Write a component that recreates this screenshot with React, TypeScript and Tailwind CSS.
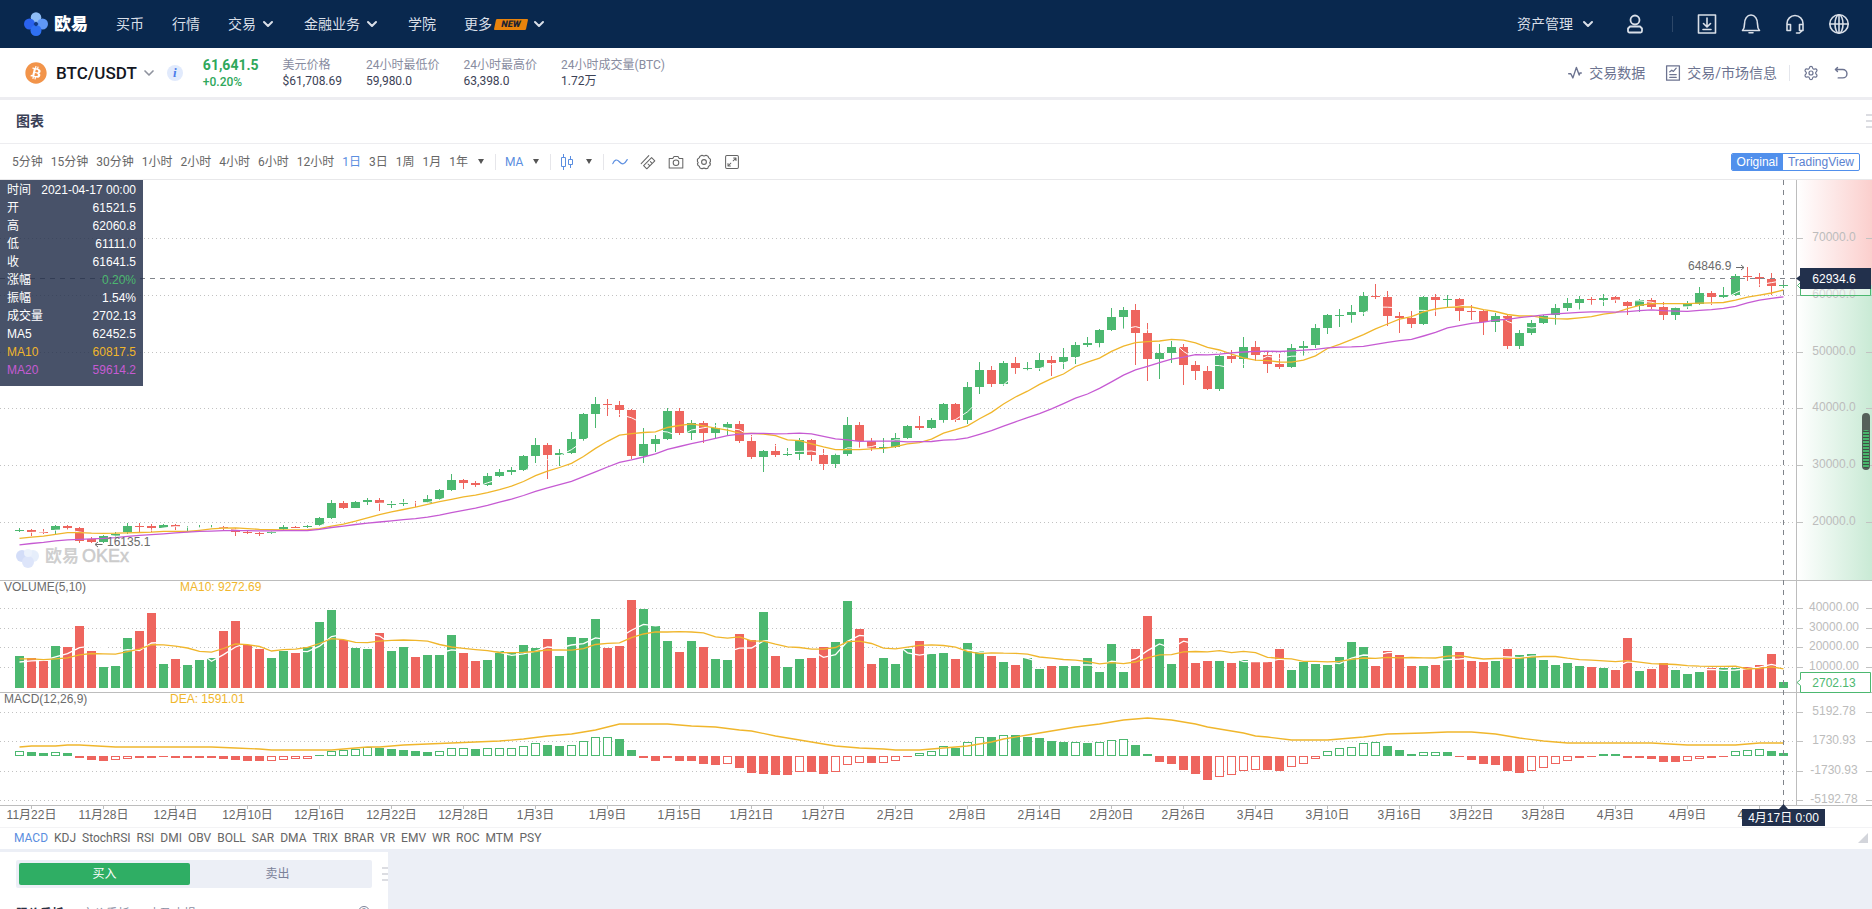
import type { ReactNode } from "react";
import { FaBitcoin } from "react-icons/fa";
import { ChevronDown, Settings } from "lucide-react";

const GREEN = "#4cb870";
const RED = "#ee655e";
const GOLD = "#f0b62c";
const PURPLE = "#c65bd3";
const WHITE = "#ffffff";

const STEP = 12;
const FIRST_X = 15;
const AXIS_X = 1796;
const VOLUME_BASE = 508;
const MACD_ZERO = 576;

// One entry per day: colour, then high / body top / body bottom / low in chart units.
const CANDLES = `
g348,350,351,352 r349,350,352,356 r349,352,353,354 g345,346,350,354 r345,346,348,350 r347,348,361,363
r357,359,362,363 g355,356,362,363 g352,354,356,357 g343,346,352,354 r343,346,347,352 r344,346,348,352
g344,345,348,348 r344,345,347,350 g346,349,349,351 g345,349,349,348 g345,348,348,348 r346,347,348,350
r348,349,352,356 r351,352,353,354 r352,353,354,356 g351,352,353,354 g345,347,349,350 r346,347,348,348
g345,346,347,348 g337,338,345,346 g320,323,338,339 r321,323,328,329 g321,322,328,328 g318,320,322,325
r318,320,323,331 g321,324,325,328 g319,323,324,326 r321,324,324,327 g315,319,323,323 g309,310,319,320
g294,300,310,311 r299,300,303,309 r301,303,305,307 g293,296,305,306 g289,292,296,297 g287,290,292,295
g275,276,290,291 g258,265,276,283 r263,265,275,299 g269,273,275,286 g252,259,273,274 g233,234,259,261
g217,224,234,248 r219,224,225,236 r221,225,230,237 r229,230,276,279 g248,264,276,283 g255,259,264,272
g228,231,259,260 r228,231,253,255 g240,243,253,260 r241,243,253,263 g243,248,253,258 g242,244,248,255
r241,244,261,263 r255,261,277,279 g270,271,277,292 r264,271,275,277 g268,274,275,276 g258,260,274,280
r259,260,275,281 r269,275,284,290 g273,275,284,288 g237,245,274,276 r242,245,261,268 r258,261,268,271
g258,267,268,273 g253,258,267,268 g245,246,258,259 r236,246,248,250 g238,240,248,249 g223,224,240,243
r223,224,240,242 g202,207,240,244 g182,190,207,214 r186,190,204,207 g181,183,204,206 r177,183,188,194
g182,188,189,191 g173,180,188,191 r176,180,183,196 g168,177,182,189 g162,165,177,184 g157,163,165,167
g149,150,163,168 g128,137,150,151 g127,130,137,149 r124,130,153,185 r143,153,179,201 g164,173,179,199
g161,167,173,183 r164,167,185,205 r181,185,191,200 r186,191,209,210 g175,176,209,211 r170,176,179,183
g157,167,179,188 r161,167,175,181 r171,175,184,193 r174,184,187,189 g164,168,187,188 g161,166,168,176
g144,148,165,168 g134,135,148,154 g129,135,136,147 g125,132,135,143 g112,116,132,136 r104,116,117,119
r111,117,136,146 r132,136,138,153 r131,138,144,148 g116,117,144,145 r114,117,120,136 g115,119,120,127
r118,119,131,141 r125,131,132,140 r130,131,142,155 g133,136,142,152 r134,136,166,169 g150,153,166,169
g140,143,153,155 g135,136,143,144 g124,128,135,145 g118,123,128,131 g116,119,123,130 r117,119,120,125
g114,118,120,126 r116,117,120,123 r121,122,126,135 g119,120,126,132 r118,120,127,129 r122,127,135,140
g127,128,135,140 g121,124,127,129 g107,113,124,125 r111,113,117,125 g107,115,117,118 g94,96,115,116
r87,96,97,101 r93,97,99,107 r93,99,106,115 g101,105,106,108`
  .trim()
  .split(/\s+/)
  .map((s) => {
    const [high, top, bottom, low] = s.slice(1).split(",").map(Number);
    return { up: s[0] === "g", high, top, bottom, low };
  });

const VOLUMES = [
  32, 30, 27, 42, 41, 62, 37, 21, 22, 50, 57, 75, 24, 29, 23, 28, 30, 57, 67, 43, 39, 30, 37, 35, 41, 66, 78, 48, 40, 39,
  55, 37, 41, 31, 33, 33, 53, 35, 27, 28, 37, 36, 43, 40, 49, 32, 51, 50, 69, 40, 42, 88, 79, 62, 47, 36, 47, 41, 29, 28,
  54, 48, 76, 32, 21, 29, 30, 41, 46, 87, 59, 24, 30, 24, 39, 47, 34, 35, 29, 45, 37, 32, 26, 23, 30, 19, 22, 22, 22, 30,
  16, 44, 16, 39, 72, 49, 24, 50, 25, 27, 27, 25, 28, 26, 26, 39, 18, 26, 24, 23, 31, 46, 41, 22, 37, 33, 22, 22, 23, 42,
  36, 27, 26, 27, 39, 33, 34, 28, 23, 25, 22, 21, 20, 18, 50, 17, 19, 25, 18, 14, 16, 20, 20, 20, 21, 23, 34, 6,
];

// Histogram values; "h" marks a hollow bar.
const MACD = `
5h 4 3 4h 3 -2 -4 -5 -4h -3h -2 -2 -1 -2 -2 -2 -2 -3 -4 -5 -5 -5h -4h -3h -3h 1 5h 6h 7h 9h 8 7 6 5 4 5h 8h 8h 7 8h
8h 8h 10h 13h 11 10 11h 15h 19h 19h 17 6 -2 -5 -2 -5 -5 -8 -9 -8h -12 -17 -18 -19 -19 -16h -16 -18 -16h -9h -7h -7
-7h -5h -1 3h 5h 10h 8 14h 19h 19 21h 21 19 18 15 14 14h 13 14h 16h 17h 11 2 -6 -8 -14 -18 -24 -21h -19h -15h -14h
-14 -15 -11h -8h -3h 5h 8h 9h 13h 14h 10 6 2 4h 4h 4 -1 -4 -8 -9 -15 -17 -15h -12h -8h -5h -2 -1 2 2 -2 -2 -3 -6 -6
-5h -3h -2 -1 5h 6h 7h 5 3`
  .trim()
  .split(/\s+/)
  .map((s) => ({ value: parseInt(s, 10), hollow: s.endsWith("h") }));

// [day index, y]
const DEA: [number, number][] = [
  [0, 567], [1, 566], [3, 566], [4, 565], [5, 565], [8, 567], [16, 567], [18, 568], [20, 569], [21, 570], [26, 570],
  [27, 569], [29, 567], [30, 567], [32, 565], [34, 564], [36, 563], [38, 562], [40, 561], [42, 559], [44, 556],
  [46, 554], [47, 552], [48, 550], [49, 547], [50, 544], [54, 544], [56, 546], [58, 547], [60, 550], [61, 551],
  [63, 556], [65, 560], [67, 564], [68, 566], [70, 568], [72, 569], [73, 570], [75, 570], [77, 568], [79, 566],
  [81, 562], [82, 559], [84, 555], [86, 551], [88, 547], [90, 544], [92, 540], [94, 538], [96, 540], [98, 544],
  [99, 547], [102, 553], [103, 556], [104, 557], [106, 560], [107, 560], [109, 560], [112, 557], [114, 554],
  [117, 553], [119, 552], [121, 552], [123, 554], [125, 558], [127, 561], [129, 563], [136, 563], [139, 565],
  [143, 565], [145, 563], [147, 563],
];

// Closes and volumes from before the visible range, so the averages start on day one.
const EARLIER_CLOSES = [379, 377, 376, 368, 368, 372, 368, 369, 369, 367, 364, 363, 365, 365, 361, 356, 355, 355, 350];
const EARLIER_VOLUMES = [30, 36, 33, 31, 32, 24, 25, 24, 25];

const DATES = [
  "11月22日", "11月28日", "12月4日", "12月10日", "12月16日", "12月22日", "12月28日", "1月3日", "1月9日", "1月15日",
  "1月21日", "1月27日", "2月2日", "2月8日", "2月14日", "2月20日", "2月26日", "3月4日", "3月10日", "3月16日",
  "3月22日", "3月28日", "4月3日", "4月9日", "4月15日",
];

const SCALE: [number, string][] = [
  [58, "70000.0"], [115, "60000.0"], [172, "50000.0"], [228, "40000.0"], [285, "30000.0"], [342, "20000.0"],
  [428, "40000.00"], [448, "30000.00"], [467, "20000.00"], [487, "10000.00"],
  [532, "5192.78"], [561, "1730.93"], [591, "-1730.93"], [620, "-5192.78"],
];

const centerX = (i: number) => FIRST_X + 4.5 + STEP * i;

function average(earlier: number[], values: number[], size: number) {
  const all = [...earlier, ...values];
  return values.map((_, i) => {
    const end = earlier.length + i + 1;
    const part = all.slice(Math.max(0, end - size), end);
    return part.reduce((a, b) => a + b, 0) / part.length;
  });
}

const toPoints = (ys: number[]) => ys.map((y, i) => `${centerX(i)},${y.toFixed(1)}`).join(" ");

function Line({ points, color, width = 1.3 }: { points: string; color: string; width?: number }) {
  return <polyline points={points} fill="none" stroke={color} strokeWidth={width} />;
}

function Chart() {
  const closes = CANDLES.map((c) => (c.up ? c.top : c.bottom));
  const volumeLine = (size: number) =>
    toPoints(average(EARLIER_VOLUMES, VOLUMES, size).map((v) => VOLUME_BASE - v));

  return (
    <svg
      viewBox="0 0 1872 647"
      className="block w-full font-['Liberation_Sans','Noto_Sans_CJK_SC',sans-serif] text-[12px]"
      role="img"
      aria-label="BTC/USDT K线图"
    >
      <defs>
        <linearGradient id="sell">
          <stop offset="0" stopColor="#fff" />
          <stop offset="1" stopColor="#fbcfcd" />
        </linearGradient>
        <linearGradient id="buy">
          <stop offset="0" stopColor="#fff" />
          <stop offset="1" stopColor="#c9ead5" />
        </linearGradient>
        <pattern id="stripes" width="8" height="3" patternUnits="userSpaceOnUse">
          <rect width="8" height="3" fill="#3f4f45" />
          <rect width="8" height="2" fill="#48b56c" />
        </pattern>
      </defs>

      {/* depth shading behind the price scale */}
      <rect x="1797" width="75" height="105" fill="url(#sell)" />
      <rect x="1797" y="105" width="75" height="295" fill="url(#buy)" />

      {/* watermark */}
      <g opacity="0.5">
        <circle cx="22" cy="376" r="6" fill="#a9bdf3" />
        <circle cx="33" cy="376" r="6" fill="#cfdff9" />
        <circle cx="28" cy="382" r="6" fill="#bdcdf6" />
        <circle cx="28" cy="373" r="4" fill="#dbe6fb" />
      </g>
      <text x="45" y="382" fontSize="17" fontWeight="700" fill="#cfcfcf">欧易</text>
      <text x="82" y="382" fontSize="18" fill="#cbcbcb" stroke="#cbcbcb" strokeWidth="0.5">OKEx</text>

      {SCALE.map(([y, label]) => (
        <g key={y}>
          <path d={`M0 ${y + 0.5}H${AXIS_X}`} stroke="#c2c2c2" strokeDasharray="1 3" />
          <path d={`M1797 ${y + 0.5}h6M1866 ${y + 0.5}h6`} stroke="#c2c2c2" />
          <text x="1834" y={y + 3} textAnchor="middle" fill="#bcbcbc">{label}</text>
        </g>
      ))}
      <path d="M0 400.5H1872M0 512.5H1872M0 625.5H1872M1796.5 0V625" stroke="#bdbdbd" fill="none" />

      {CANDLES.map((c, i) => {
        const x = FIRST_X + STEP * i;
        const color = c.up ? GREEN : RED;
        return (
          <g key={i} fill={color}>
            <rect x={x + 4} y={c.high} width="1" height={Math.max(1, c.low - c.high)} />
            <rect x={x} y={c.top} width="9" height={c.bottom - c.top} />
            <rect x={x} y={VOLUME_BASE - VOLUMES[i]} width="9" height={VOLUMES[i]} />
          </g>
        );
      })}

      {MACD.map(({ value, hollow }, i) => {
        const x = FIRST_X + STEP * i;
        const color = value > 0 ? GREEN : RED;
        const size = Math.abs(value);
        const y = value > 0 ? MACD_ZERO - size : MACD_ZERO;
        return hollow ? (
          <rect key={i} x={x + 0.5} y={y + 0.5} width="8" height={size - 1} fill="#fff" stroke={color} />
        ) : (
          <rect key={i} x={x} y={y} width="9" height={size} fill={color} />
        );
      })}

      <Line points={toPoints(average(EARLIER_CLOSES, closes, 5))} color={WHITE} width={1} />
      <Line points={toPoints(average(EARLIER_CLOSES, closes, 10))} color={GOLD} />
      <Line points={toPoints(average(EARLIER_CLOSES, closes, 20))} color={PURPLE} />
      <Line points={volumeLine(5)} color={WHITE} />
      <Line points={volumeLine(10)} color={GOLD} />
      <Line points={DEA.map(([i, y]) => `${centerX(i)},${y}`).join(" ")} color={GOLD} />

      <g fill="#6b6b6b">
        <text x="107" y="366">16135.1</text>
        <text x="1688" y="90">64846.9</text>
        <text x="4" y="411">VOLUME(5,10)</text>
        <text x="4" y="523">MACD(12,26,9)</text>
      </g>
      <path d="M95.5 364.5h7M98 362l-3 2.500l3 2.500M1736 87.500h8M1741 85l3 2.500l-3 2.500" fill="none" stroke="#6b6b6b" />
      <text x="180" y="411" fill={GOLD}>MA10: 9272.69</text>
      <text x="170" y="523" fill={GOLD}>DEA: 1591.01</text>

      {DATES.map((date, n) => {
        const x = centerX(1 + n * 6);
        return (
          <g key={date}>
            <path d={`M${x} 625v4`} stroke="#bdbdbd" />
            <text x={x} y="639" textAnchor="middle" fill="#666">{date}</text>
          </g>
        );
      })}

      {/* crosshair */}
      <path d={`M0 98.500H${AXIS_X}M1783.500 0V625`} stroke="#80848b" strokeDasharray="5 5" fill="none" />

      {/* last price, under the crosshair tag */}
      <path d="M1800.500 95.500H1870.500V115.500H1800.500V108.500L1797.500 105.500L1800.500 102.500Z" fill="#fff" fillOpacity="0.400" stroke={GREEN} />
      <path d="M1800 88H1871V109H1800V101.500L1796 98.500L1800 95.500Z" fill="#22304c" />
      <text x="1834" y="103" textAnchor="middle" fill="#fff">62934.6</text>

      {/* last volume */}
      <path d="M1800.500 492.500H1870.500V512.500H1800.500V505.500L1797 502.500L1800.500 499.500Z" fill="#fff" stroke={GREEN} />
      <text x="1834" y="507" textAnchor="middle" fill={GREEN}>2702.13</text>

      <path d="M1742 629H1779L1783.500 624L1788 629H1825V646H1742Z" fill="#22304c" />
      <text x="1783.500" y="642" textAnchor="middle" fill="#fff">4月17日 0:00</text>

      {/* order depth gauge */}
      <rect x="1862" y="233" width="8" height="57" rx="4" fill="#55605a" />
      <rect x="1863" y="250" width="6" height="38" rx="2" fill="url(#stripes)" />
    </svg>
  );
}

const LEGEND = [
  ["时间", "2021-04-17 00:00", "text-white", "text-white"],
  ["开", "61521.5", "text-white", "text-white"],
  ["高", "62060.8", "text-white", "text-white"],
  ["低", "61111.0", "text-white", "text-white"],
  ["收", "61641.5", "text-white", "text-white"],
  ["涨幅", "0.20%", "text-white", "text-[#4cb870]"],
  ["振幅", "1.54%", "text-white", "text-white"],
  ["成交量", "2702.13", "text-white", "text-white"],
  ["MA5", "62452.5", "text-white", "text-white"],
  ["MA10", "60817.5", "text-[#f0b62c]", "text-[#f0b62c]"],
  ["MA20", "59614.2", "text-[#c65bd3]", "text-[#c65bd3]"],
];

function Legend() {
  return (
    <dl className="absolute left-0 top-0 w-[143px] bg-[#232f4b]/83 px-[7px] pb-[7px] pt-px font-['Liberation_Sans','Noto_Sans_CJK_SC',sans-serif] text-xs leading-[18px]">
      {LEGEND.map(([label, value, labelColor, valueColor]) => (
        <div key={label} className="flex h-[18px] justify-between">
          <dt className={labelColor}>{label}</dt>
          <dd className={valueColor}>{value}</dd>
        </div>
      ))}
    </dl>
  );
}

function Icon({ size = 20, width = 1.5, children }: { size?: number; width?: number; children: ReactNode }) {
  return (
    <svg
      width={size}
      height={size}
      viewBox="0 0 20 20"
      fill="none"
      stroke="currentColor"
      strokeWidth={width}
      strokeLinecap="round"
      strokeLinejoin="round"
      className="shrink-0"
      aria-hidden="true"
    >
      {children}
    </svg>
  );
}

function Logo() {
  return (
    <a href="#" className="flex items-center gap-1.5 text-white">
      <svg width="24" height="24" viewBox="0 0 24 24" aria-hidden="true">
        <circle cx="12" cy="5.500" r="5.300" fill="#8fbdf5" />
        <circle cx="5.500" cy="12" r="5.500" fill="#2a62ee" />
        <circle cx="18.500" cy="12" r="5.500" fill="#5f98f6" />
        <circle cx="12" cy="18.500" r="5.500" fill="#2f70f2" />
        <path d="M12 9.500L14.500 12 12 14.500 9.500 12z" fill="#123a85" />
      </svg>
      <span className="text-[17px] font-black leading-6">欧易</span>
    </a>
  );
}

const NAV = [
  { label: "买币" },
  { label: "行情" },
  { label: "交易", menu: true },
  { label: "金融业务", menu: true },
  { label: "学院" },
  { label: "更多", menu: true, isNew: true },
];

function TopBar() {
  return (
    <header className="flex h-12 shrink-0 items-center bg-[#09284e] pl-6 pr-[23px] text-sm text-[#d9dfe8]">
      <Logo />
      <nav className="ml-7 flex gap-7">
        {NAV.map((item) => (
          <a key={item.label} href="#" className="flex items-center leading-5">
            {item.label}
            {item.isNew && (
              <span className="ml-[3px] h-[11px] w-8 -skew-x-12 rounded-[1px] bg-[#e8830c] text-center text-[9px] font-black leading-[11px] text-[#1b2233]">
                NEW
              </span>
            )}
            {item.menu && <ChevronDown className="ml-1 size-4" strokeWidth={3} />}
          </a>
        ))}
      </nav>
      <div className="ml-auto flex items-center">
        <button className="flex items-center gap-[7px] leading-5">
          资产管理 <ChevronDown className="size-4" strokeWidth={3} />
        </button>
        <button className="ml-[29px]" aria-label="账户">
          <Icon width={1.8}>
            <circle cx="10" cy="6" r="4.500" />
            <path d="M5 12.500h10l2 2v2.500a1.500 1.500 0 0 1-1.500 1.500h-11A1.500 1.500 0 0 1 3 17v-2.500z" />
          </Icon>
        </button>
        <span className="ml-[27px] h-4 w-px bg-[#2d4768]" />
        <div className="ml-6 flex gap-6">
          <button aria-label="下载">
            <Icon width={1.6}>
              <path d="M1.500 1h17v18h-17zM10 4v8.500M6.500 9.500l3.500 3.500 3.500-3.500M6 15.500h8" />
            </Icon>
          </button>
          <button aria-label="通知">
            <Icon width={1.6}>
              <path d="M1.500 16.500h17c-1.500-1.500-2-3-2-6.500 0-5-2.500-9-6.500-9s-6.500 4-6.500 9c0 3.500-.5 5-2 6.500zM8 18.800h4" />
            </Icon>
          </button>
          <button aria-label="客服">
            <Icon width={1.6}>
              <path d="M2 14V9.500a8 8 0 0 1 16 0v6.500l-3.500 3h-3M2 10.500h3.500v6H2zM14.500 10.500H18v6h-3.500z" />
            </Icon>
          </button>
          <button aria-label="语言">
            <Icon width={1.6}>
              <circle cx="10" cy="10" r="9.200" />
              <ellipse cx="10" cy="10" rx="4" ry="9.200" />
              <path d="M1 10h18M10 1v18" />
            </Icon>
          </button>
        </div>
      </div>
    </header>
  );
}

const STATS = [
  ["美元价格", "$61,708.69"],
  ["24小时最低价", "59,980.0"],
  ["24小时最高价", "63,398.0"],
  ["24小时成交量(BTC)", "1.72万"],
];

function PairBar() {
  return (
    <section className="flex h-[52px] shrink-0 items-center border-b-[3px] border-[#ededf1] pl-[25px] pr-6 text-[#6c7390]">
      <FaBitcoin className="size-[22px] text-[#f2944a]" />
      <button className="ml-[9px] flex items-center text-[17px] font-medium leading-6 text-[#131722]">
        BTC/USDT
        <ChevronDown className="ml-1 size-4 text-[#8f939e]" strokeWidth={2.5} />
      </button>
      <button
        className="ml-2.5 size-4 rounded-full bg-[#e1eafc] font-['Liberation_Serif',serif] text-[13px] font-bold italic leading-4 text-[#4a7bea]"
        aria-label="币种信息"
      >
        i
      </button>
      <div className="ml-5 flex gap-6 pt-0.5 text-xs leading-4">
        <div className="font-medium text-[#2fa85b]">
          <div className="text-sm font-bold leading-4">61,641.5</div>
          <div className="mt-px">+0.20%</div>
        </div>
        {STATS.map(([label, value]) => (
          <div key={label}>
            <div className="text-[#888ca0]">{label}</div>
            <div className="text-[#3c4256]">{value}</div>
          </div>
        ))}
      </div>
      <div className="ml-auto flex items-center text-sm leading-5">
        <a href="#" className="flex items-center gap-[7px]">
          <Icon size={14} width={2}>
            <path d="M1 11h3l3 6 5-15 4 11 1-3h2" />
          </Icon>
          交易数据
        </a>
        <a href="#" className="ml-5 flex items-center gap-1.5">
          <Icon size={16} width={1.6}>
            <path d="M2 1h16v18H2zM6 15.500h8M6 12h8M6 8.500l2.500-2 2 1.500L14 4" />
          </Icon>
          交易/市场信息
        </a>
        <span className="ml-3 h-4 w-px bg-[#e4e6ec]" />
        <button className="ml-[13px]" aria-label="设置"><Settings className="size-4" strokeWidth={1.8} /></button>
        <button className="ml-[15px]" aria-label="撤销">
          <Icon size={14} width={2}>
            <path d="M2 5h10.500a5.500 5.500 0 0 1 0 12H6M2 5l3-3M2 5l3 3" />
          </Icon>
        </button>
      </div>
    </section>
  );
}

function DragHandle() {
  return (
    <span className="flex w-1.5 flex-col gap-1" aria-hidden="true">
      <span className="h-0.5 bg-[#dcdde2]" />
      <span className="h-0.5 bg-[#dcdde2]" />
      <span className="h-0.5 bg-[#dcdde2]" />
    </span>
  );
}

const Caret = () => <span className="border-x-[3px] border-t-[5px] border-x-transparent border-t-[#555]" />;
const Divider = () => <span className="h-4 w-px bg-[#e6e6ea]" />;

const INTERVALS = ["5分钟", "15分钟", "30分钟", "1小时", "2小时", "4小时", "6小时", "12小时", "1日", "3日", "1周", "1月", "1年"];

function Toolbar() {
  return (
    <div className="flex h-9 shrink-0 items-center border-b border-[#e8e8ea] pl-3 pr-3 text-xs leading-4 text-[#666]">
      <div className="flex gap-2">
        {INTERVALS.map((label) => (
          <button key={label} className={label === "1日" ? "text-[#5b8ee0]" : ""}>{label}</button>
        ))}
      </div>
      <button className="ml-2.5 flex" aria-label="更多周期"><Caret /></button>
      <div className="ml-[11px] flex items-center gap-[9px]">
        <Divider />
        <button className="flex items-center gap-2.5 pr-0.5 text-[#5b8ee0]">MA <Caret /></button>
        <Divider />
        <button className="flex items-center gap-3 pr-0.5 text-[#5b8ee0]" aria-label="图表类型">
          <svg width="14" height="16" viewBox="0 0 14 16" fill="none" stroke="currentColor" aria-hidden="true">
            <path d="M3.500 0v3M3.500 13v3M1.500 3.500h4v9h-4zM10.500 2v3M10.500 11v3M8.500 5.500h4v5h-4z" />
          </svg>
          <Caret />
        </button>
        <Divider />
      </div>
      <div className="ml-2 flex items-center gap-3">
        <button className="text-[#5b8ee0]" aria-label="指标">
          <Icon size={16}>
            <path d="M1 12c2-5 5-6 8.500-2s6 3 9.500-3" />
          </Icon>
        </button>
        <button aria-label="画线">
          <Icon size={16} width={1.3}>
            <path d="M1.500 12L11 2M4.500 14.500L14.500 4.500l4 4L8.500 18.500zM10 12.500l1.500 1.500M13 9.500l1.500 1.500" />
          </Icon>
        </button>
        <button aria-label="截图">
          <Icon size={16} width={1.3}>
            <path d="M1.500 5.500H6L7.500 3h5L14 5.500h4.500v12h-17z" />
            <circle cx="10" cy="11" r="3.500" />
          </Icon>
        </button>
        <button aria-label="图表设置">
          <Icon size={16} width={1.4}>
            <path d="M7.500 1.500c1.500 1 3.500 1 5 0l2.500 1.200c.2 1.800 1.200 3 3 3.800v3.200c-1.200 1-1.200 1.500 0 2.500l-.5 2c-1.800.8-2.500 2-2.700 3.500L12.500 18.500c-1.500-1-3.500-1-5 0L5 17.500c-.2-1.800-1-2.800-2.700-3.500l-.5-2c1.200-1 1.200-1.500 0-2.500V6.500c1.800-.8 3-2 3.200-3.800z" />
            <circle cx="10" cy="10" r="3" />
          </Icon>
        </button>
        <button aria-label="全屏">
          <Icon size={16} width={1.3}>
            <rect x="2" y="2" width="16" height="16" rx="1.500" />
            <path d="M11.500 8.500L15 5M12 5h3v3M8.500 11.500L5 15M8 15H5v-3" />
          </Icon>
        </button>
      </div>
      <div className="ml-auto flex h-[18px] overflow-hidden rounded-xs border border-[#5190ec] font-['Liberation_Sans',sans-serif] leading-4">
        <button className="bg-[#5190ec] px-[5px] text-white">Original</button>
        <button className="px-[5px] text-[#5b82d0]">TradingView</button>
      </div>
    </div>
  );
}

const INDICATORS = [
  "MACD", "KDJ", "StochRSI", "RSI", "DMI", "OBV", "BOLL", "SAR", "DMA", "TRIX", "BRAR", "VR", "EMV", "WR", "ROC", "MTM", "PSY",
];

function OrderPanel() {
  return (
    <section className="flex-1 w-[388px] bg-white pt-2 text-xs leading-4">
      <div className="flex items-center">
        <div className="ml-4 flex h-7 w-[356px] rounded-xs bg-[#eceff6] p-[3px]">
          <button className="w-[171px] rounded-xs bg-[#2fae64] text-white">买入</button>
          <button className="flex-1 pr-1 text-[#7b8199]">卖出</button>
        </div>
        <div className="ml-auto"><DragHandle /></div>
      </div>
      <div className="mt-[18px] flex gap-[18px] pl-4 pr-[18px] text-[#8a8fa3]">
        <button className="font-bold text-[#2a3042]">限价委托</button>
        <button>市价委托</button>
        <button>止盈止损</button>
        <button className="ml-auto size-3 rounded-full border border-[#7b8199] text-[9px] leading-[10px]" aria-label="帮助">?</button>
      </div>
    </section>
  );
}

export default function App() {
  return (
    <div className="flex h-screen flex-col overflow-hidden bg-[#eceff6] font-['Roboto','Noto_Sans_CJK_SC',sans-serif]">
      <TopBar />
      <main className="flex min-h-0 flex-1 flex-col">
        <div className="shrink-0 bg-white">
          <PairBar />
          <div className="flex h-11 items-center justify-between border-b border-[#ededf0] pb-0.5 pl-4">
            <h2 className="text-sm font-bold leading-5 text-[#3a4156]">图表</h2>
            <DragHandle />
          </div>
          <Toolbar />
          <div className="relative">
            <Chart />
            <Legend />
          </div>
          <div className="flex h-[22px] items-center gap-1.5 border-t border-[#f3f3f5] pb-0.5 pl-3.5 pr-1 text-xs leading-4 text-[#666]">
            {INDICATORS.map((name) => (
              <button key={name} className={name === "MACD" ? "text-[#5b8ee0]" : ""}>{name}</button>
            ))}
            <span className="ml-auto border-b-[10px] border-l-[10px] border-b-[#d3d5db] border-l-transparent" />
          </div>
        </div>
        <div className="mt-[3px] flex min-h-0 flex-1 flex-col">
          <OrderPanel />
        </div>
      </main>
    </div>
  );
}
